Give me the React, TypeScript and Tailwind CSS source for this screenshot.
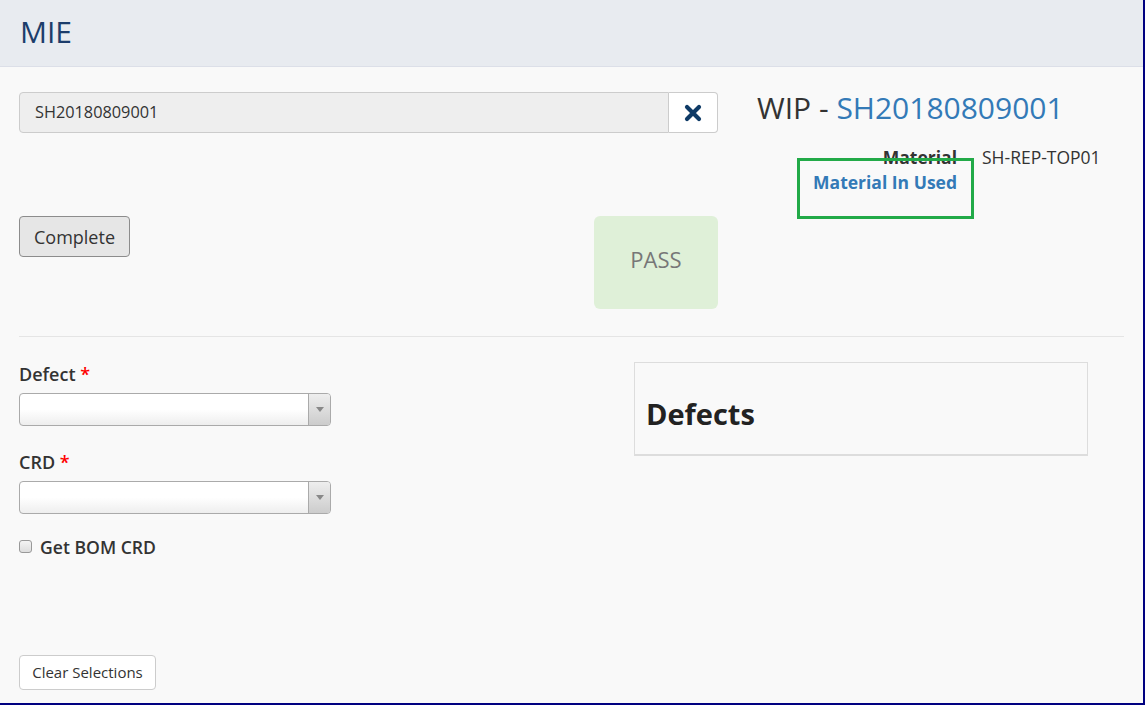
import React from "react";

const Select: React.FC = () => (
  <div className="flex h-[33px] w-[312px] rounded-[4px] border border-[#aaaaaa] bg-gradient-to-b from-white from-50% to-[#eeeeee] overflow-hidden">
    <div className="flex-1" />
    <div className="flex w-[22px] items-center justify-center border-l border-[#aaaaaa] bg-gradient-to-b from-[#eeeeee] to-[#cccccc]">
      <svg width="8" height="5" viewBox="0 0 8 5">
        <path d="M0 0 L8 0 L4 5 Z" fill="#888888" />
      </svg>
    </div>
  </div>
);

const App: React.FC = () => {
  return (
    <div className="w-[1145px] h-[705px] border-r-2 border-b-2 border-[#000080] bg-[#f9f9f9] font-['Open_Sans',sans-serif] text-[#333333] relative">
      <header className="flex h-[67px] items-center border-b border-[#dcdfe8] bg-[#e8ebf0] px-[20px]">
        <h1 className="-mt-[2px] text-[30px] leading-[36px] text-[#1c3d6b]">MIE</h1>
      </header>

      <main className="px-[19px] pt-[25px]">
        <div className="flex">
          <div className="w-[699px]">
            <div className="flex h-[41px]">
              <div className="flex flex-1 items-center rounded-l-[4px] border border-[#cccccc] bg-[#eeeeee] px-[15px] text-[16.3px]">
                SH20180809001
              </div>
              <button className="flex w-[49px] items-center justify-center rounded-r-[4px] border border-l-0 border-[#cccccc] bg-white">
                <svg width="18" height="18" viewBox="0 0 18 18">
                  <path
                    d="M3 3 L15 15 M15 3 L3 15"
                    stroke="#0e3a66"
                    strokeWidth="4.2"
                    strokeLinecap="round"
                  />
                </svg>
              </button>
            </div>
            <div className="mt-[83px] flex items-start justify-between">
              <button className="h-[41px] w-[111px] rounded-[4px] border border-[#8c8c8c] bg-[#e6e6e6] pt-[1px] text-[18px] text-[#333333]">
                Complete
              </button>
              <div className="flex h-[93px] w-[124px] items-center justify-center rounded-[6px] bg-[#dff0d8] pb-[6px] text-[22px] text-[#777777]">
                PASS
              </div>
            </div>
          </div>

          <div className="ml-[39px] -mt-[2px]">
            <div className="text-[30px] leading-[36px] text-[#333333]">
              WIP - <span className="text-[#337ab7]">SH20180809001</span>
            </div>
            <div className="mt-[19px] text-[17.5px] leading-[25px]">
              <div className="flex">
                <div className="w-[200px] text-right font-bold">Material</div>
                <div className="ml-[25px]">SH-REP-TOP01</div>
              </div>
              <div className="flex">
                <div className="w-[200px] text-right font-bold text-[#337ab7]">Material In Used</div>
              </div>
            </div>
          </div>
        </div>

        <hr className="mt-[27px] border-t border-[#e5e5e5]" />

        <div className="mt-[25px] flex">
          <div className="w-[312px]">
            <label className="block text-[18px] font-semibold leading-[24px]">
              Defect <span className="text-[#ff0000]">*</span>
            </label>
            <div className="mt-[7px]">
              <Select />
            </div>
            <label className="mt-[24px] block text-[18px] font-semibold leading-[24px]">
              CRD <span className="text-[#ff0000]">*</span>
            </label>
            <div className="mt-[7px]">
              <Select />
            </div>
            <div className="mt-[21px] flex items-center text-[17.6px] font-semibold leading-[24px]">
              <span className="h-[13px] w-[13px] -translate-y-[1px] rounded-[3px] border border-[#999999] bg-gradient-to-b from-[#f4f4f4] to-[#dddddd]" />
              <span className="ml-[8px]">Get BOM CRD</span>
            </div>
          </div>

          <div className="ml-[303px] h-[94px] w-[454px] border border-b-2 border-[#dddddd] px-[11px] pt-[35px]">
            <h2 className="text-[29px] font-bold leading-[32px] text-[#222222]">Defects</h2>
          </div>
        </div>

        <button className="mt-[96px] h-[35px] w-[137px] rounded-[4px] border border-[#cccccc] bg-white text-[15px] text-[#333333]">
          Clear Selections
        </button>
      </main>

      <div className="absolute left-[797px] top-[158px] h-[61px] w-[177px] border-[3px] border-[#22aa48]" />
    </div>
  );
};

export default App;
